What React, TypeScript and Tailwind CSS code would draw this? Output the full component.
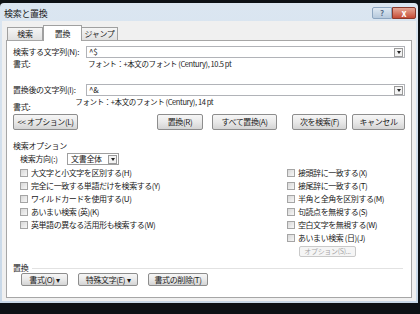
import React from "react";

const jp = "font-['Meiryo_UI','Noto_Sans_CJK_JP','Noto_Sans',sans-serif]";

const Btn = ({
  children,
  className = "",
}: {
  children: React.ReactNode;
  className?: string;
}) => (
  <div
    className={`flex items-center justify-center rounded-[2px] border border-[#8d8d8d] bg-linear-to-b from-[#f6f6f6] via-[#e9e9e9] to-[#d4d4d4] text-[8px] tracking-[-0.4px] text-[#1a1a1a] ${className}`}
  >
    {children}
  </div>
);

const Check = ({ label }: { label: string }) => (
  <div className="h-[13px] flex items-center gap-[3px]">
    <div className="w-[8px] h-[8px] border border-[#a5a5a5] bg-linear-to-br from-[#d8d8d8] to-[#f7f7f7]" />
    <span className="text-[8px] tracking-[-0.45px]">{label}</span>
  </div>
);

const Arrow = () => (
  <div className="w-[9px] h-[9px] border border-[#9a9a9a] bg-[#f3f3f3] flex items-center justify-center">
    <div className="w-0 h-0 border-l-[2.5px] border-r-[2.5px] border-t-[3px] border-l-transparent border-r-transparent border-t-[#222]" />
  </div>
);

export default function App() {
  return (
    <div
      className={`w-[420px] h-[314px] bg-[#0d1115] overflow-hidden ${jp} text-[#1a1a1a] leading-none`}
    >
      <div className="h-[3px]" />
      {/* dialog */}
      <div className="w-[418px] h-[300px] flex flex-col bg-linear-to-b from-[#dbe6f1] to-[#c8d8e8] rounded-t-[4px] px-[2px] pb-[2px]">
        {/* title bar */}
        <div className="h-[18px] flex items-start justify-between">
          <span className="pl-[2px] pt-[6px] text-[9px] tracking-[-0.3px] text-[#1a1a1a]">
            検索と置換
          </span>
          <div className="flex mt-[4px]">
            <div className="w-[20px] h-[12px] rounded-l-[2px] border border-[#8ea6c0] bg-linear-to-b from-[#dfe9f3] to-[#b6c9dc] flex items-center justify-center text-[8px] font-bold text-[#59708a]">
              ?
            </div>
            <div className="w-[24px] h-[12px] rounded-r-[2px] border border-[#8b3a2c] bg-linear-to-b from-[#e6a796] to-[#c44a35] flex items-center justify-center text-[9px] font-bold text-white">
              x
            </div>
          </div>
        </div>
        {/* body */}
        <div className="flex-1 flex flex-col bg-[#f0f0f0] px-[4px] pt-[3px] pb-[3px]">
          {/* tabs */}
          <div className="h-[16px] flex items-end pl-[1px] text-[8px] tracking-[-0.3px]">
            <div className="w-[36px] h-[13px] border border-b-0 border-[#a0a0a0] bg-linear-to-b from-[#f5f5f5] to-[#e0e0e0] flex items-center justify-center">
              検索
            </div>
            <div className="w-[39px] h-[16px] border border-b-0 border-[#a0a0a0] bg-white mb-[-1px] relative flex items-center justify-center">
              置換
            </div>
            <div className="w-[36px] h-[13px] border border-b-0 border-l-0 border-[#a0a0a0] bg-linear-to-b from-[#f5f5f5] to-[#e0e0e0] flex items-center justify-center">
              ジャンプ
            </div>
          </div>
          {/* panel */}
          <div className="flex-1 flex flex-col border border-[#a6a6a6] bg-white pl-[6px] pr-[6px] pt-[5px] text-[8px] tracking-[-0.3px]">
            {/* find */}
            <div className="h-[12px] flex items-center">
              <span className="w-[73px]">検索する文字列(N):</span>
              <div className="flex-1 h-[12px] border border-[#b1b3b8] flex items-center justify-between pl-[2px] pr-[1px]">
                <span>^$</span>
                <Arrow />
              </div>
            </div>
            <div className="h-[12px] flex items-center">
              <span className="w-[75px]">書式:</span>
              <span className="text-[7.5px] tracking-[-0.4px]">
                フォント：+本文のフォント (Century), 10.5 pt
              </span>
            </div>
            {/* replace */}
            <div className="h-[12px] mt-[14px] flex items-center">
              <span className="w-[73px]">置換後の文字列(I):</span>
              <div className="flex-1 h-[12px] border border-[#b1b3b8] flex items-center justify-between pl-[2px] pr-[1px]">
                <span>^&amp;</span>
                <Arrow />
              </div>
            </div>
            <div className="h-[16px] flex justify-between">
              <span className="self-end pb-[1px]">書式:</span>
              <span className="flex-1 pl-[45px] pt-[2px] text-[7.5px] tracking-[-0.4px]">
                フォント：+本文のフォント (Century), 14 pt
              </span>
            </div>
            {/* buttons */}
            <div className="h-[16px] mt-[2px] flex">
              <Btn className="w-[65px]">&lt;&lt; オプション(L)</Btn>
              <div className="flex-1" />
              <Btn className="w-[46px]">置換(R)</Btn>
              <Btn className="w-[65px] ml-[9px]">すべて置換(A)</Btn>
              <Btn className="w-[55px] ml-[15px]">次を検索(F)</Btn>
              <Btn className="w-[53px] ml-[5px]">キャンセル</Btn>
            </div>
            {/* options */}
            <div className="h-[12px] mt-[10px] flex items-center">検索オプション</div>
            <div className="h-[12px] mt-[1px] ml-[7px] flex items-center">
              <span className="w-[47px]">検索方向(:)</span>
              <div className="w-[52px] h-[12px] border border-[#9e9e9e] flex items-center justify-between pl-[3px] pr-[1px]">
                <span>文書全体</span>
                <Arrow />
              </div>
            </div>
            <div className="flex mt-[1px]">
              <div className="w-[274px] pl-[7px] flex flex-col">
                <Check label="大文字と小文字を区別する(H)" />
                <Check label="完全に一致する単語だけを検索する(Y)" />
                <Check label="ワイルドカードを使用する(U)" />
                <Check label="あいまい検索 (英)(K)" />
                <Check label="英単語の異なる活用形も検索する(W)" />
              </div>
              <div className="flex flex-col">
                <Check label="接頭辞に一致する(X)" />
                <Check label="接尾辞に一致する(T)" />
                <Check label="半角と全角を区別する(M)" />
                <Check label="句読点を無視する(S)" />
                <Check label="空白文字を無視する(W)" />
                <Check label="あいまい検索 (日)(J)" />
                <div className="w-[57px] h-[11px] mt-[2px] ml-[12px] border border-[#c9c9c9] bg-[#f5f5f5] rounded-[2px] flex items-center justify-center text-[7px] text-[#a8a8a8]">
                  オプション(S)...
                </div>
              </div>
            </div>
            {/* replace group */}
            <div className="h-[10px] mt-[6px] flex items-center gap-[4px] pr-[2px]">
              <span>置換</span>
              <div className="flex-1 h-px bg-[#e2e2e2]" />
            </div>
            <div className="h-[13px] flex ml-[8px]">
              <Btn className="w-[47px]">書式(O) ▾</Btn>
              <Btn className="w-[60px] ml-[10px] border-[#4f8cc2] from-[#eef6fc] via-[#dfecf7] to-[#c8dcee]">
                特殊文字(E) ▾
              </Btn>
              <Btn className="w-[60px] ml-[10px]">書式の削除(T)</Btn>
            </div>
          </div>
        </div>
      </div>
    </div>
  );
}
